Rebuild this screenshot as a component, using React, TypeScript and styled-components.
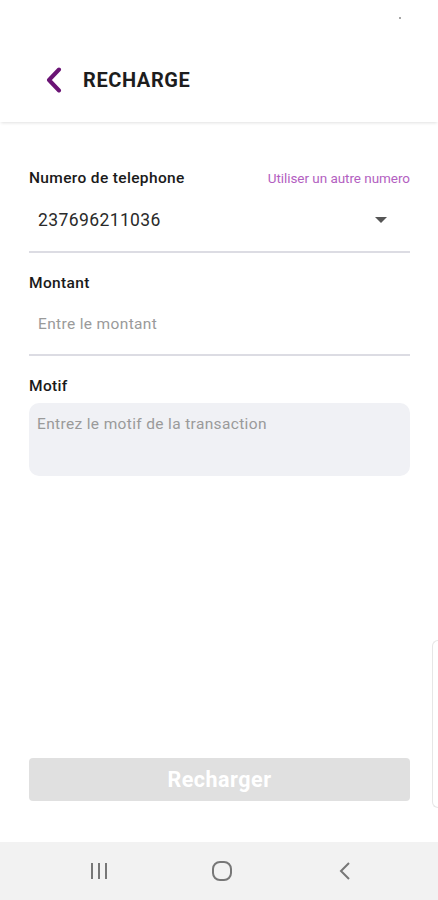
import React from "react";
import styled, { createGlobalStyle } from "styled-components";

const Global = createGlobalStyle`
  html, body { margin: 0; padding: 0; background: #ffffff; }
  body { font-family: Roboto, "Noto Sans", sans-serif; }
  * { box-sizing: border-box; }
`;

const Screen = styled.div`
  position: relative;
  width: 438px;
  height: 900px;
  display: flex;
  flex-direction: column;
  background: #fff;
  overflow: hidden;
`;

const StatusBar = styled.div`
  height: 38px;
  position: relative;
`;

const Dot = styled.span`
  position: absolute;
  left: 399px;
  top: 17px;
  width: 2px;
  height: 2px;
  border-radius: 50%;
  background: #888;
`;

const Header = styled.header`
  height: 84px;
  display: flex;
  align-items: center;
  padding: 0 0 0 45px;
  gap: 21px;
  box-shadow: 0 2px 3px -1px rgba(0, 0, 0, 0.12);
  position: relative;
  z-index: 1;
`;

const BackButton = styled.button`
  border: 0;
  background: none;
  padding: 0;
  width: 17px;
  height: 26px;
  display: flex;
  align-items: center;
  justify-content: center;
`;

const Title = styled.h1`
  margin: 0;
  font-size: 20px;
  font-weight: 700;
  color: #1d1d1d;
  letter-spacing: 0.6px;
`;

const Form = styled.main`
  flex: 1;
  display: flex;
  flex-direction: column;
  padding: 47px 28px 0 29px;
`;

const LabelRow = styled.div`
  display: flex;
  justify-content: space-between;
  align-items: baseline;
  height: 20px;
`;

const Label = styled.label`
  font-size: 15.5px;
  font-weight: 500;
  color: #1a1a1a;
  letter-spacing: 0.35px;
`;

const Link = styled.a`
  font-size: 13.5px;
  color: #b35fc1;
  text-decoration: none;
  letter-spacing: -0.05px;
`;

const UnderlineField = styled.div<{ $h: number }>`
  height: ${(p) => p.$h}px;
  display: flex;
  align-items: center;
  justify-content: space-between;
  padding: 0 23px 0 9px;
  border-bottom: 2px solid #dcdce3;
`;

const Value = styled.span`
  font-size: 17.5px;
  color: #2a2a2a;
  letter-spacing: 0.4px;
`;

const Placeholder = styled.span`
  font-size: 15.5px;
  color: #9a9a9a;
  letter-spacing: 0.35px;
`;

const Caret = styled.span`
  width: 0;
  height: 0;
  border-left: 6px solid transparent;
  border-right: 6px solid transparent;
  border-top: 6px solid #555;
`;

const Section = styled.div<{ $mt: number }>`
  margin-top: ${(p) => p.$mt}px;
  display: flex;
  flex-direction: column;
`;

const TextArea = styled.div`
  margin-top: 6px;
  height: 73px;
  background: #f0f1f5;
  border-radius: 10px;
  padding: 12px 8px;
  font-size: 15.5px;
  color: #9a9a9a;
  letter-spacing: 0.35px;
`;

const Spacer = styled.div`
  flex: 1;
`;

const SubmitButton = styled.button`
  height: 43px;
  border: 0;
  border-radius: 4px;
  background: #e0e0e0;
  color: #ffffff;
  font-family: Roboto, sans-serif;
  font-size: 21.5px;
  font-weight: 700;
  letter-spacing: 0.5px;
  margin-bottom: 41px;
`;

const NavBar = styled.nav`
  height: 58px;
  background: #f2f2f2;
  display: grid;
  grid-template-columns: 123px 123px 123px;
  align-items: center;
  justify-items: center;
  padding: 0 0 0 37px;
`;

const EdgeHandle = styled.div`
  position: absolute;
  right: -4px;
  top: 640px;
  width: 10px;
  height: 168px;
  border: 1.5px solid #e6e6e6;
  border-right: 0;
  border-radius: 6px 0 0 6px;
`;

export default function App() {
  return (
    <Screen>
      <Global />
      <StatusBar>
        <Dot />
      </StatusBar>
      <Header>
        <BackButton aria-label="Retour">
          <svg width="17" height="26" viewBox="0 0 17 26">
            <path d="M14 2.5 L4 13 L14 23.5" fill="none" stroke="#6b1475" strokeWidth="4" strokeLinecap="round" strokeLinejoin="round" />
          </svg>
        </BackButton>
        <Title>RECHARGE</Title>
      </Header>
      <Form>
        <Section $mt={0}>
          <LabelRow>
            <Label>Numero de telephone</Label>
            <Link>Utiliser un autre numero</Link>
          </LabelRow>
          <UnderlineField $h={64}>
            <Value>237696211036</Value>
            <Caret />
          </UnderlineField>
        </Section>
        <Section $mt={21}>
          <LabelRow>
            <Label>Montant</Label>
          </LabelRow>
          <UnderlineField $h={62}>
            <Placeholder>Entre le montant</Placeholder>
          </UnderlineField>
        </Section>
        <Section $mt={21}>
          <LabelRow>
            <Label>Motif</Label>
          </LabelRow>
          <TextArea>Entrez le motif de la transaction</TextArea>
        </Section>
        <Spacer />
        <SubmitButton>Recharger</SubmitButton>
      </Form>
      <NavBar>
        <svg width="20" height="18" viewBox="0 0 20 18">
          <path d="M3 1v16M10 1v16M17 1v16" stroke="#777" strokeWidth="2" />
        </svg>
        <svg width="22" height="22" viewBox="0 0 22 22">
          <rect x="2" y="2" width="18" height="18" rx="7" fill="none" stroke="#777" strokeWidth="2" />
        </svg>
        <svg width="14" height="20" viewBox="0 0 14 20">
          <path d="M11 2 L3 10 L11 18" fill="none" stroke="#777" strokeWidth="2" />
        </svg>
      </NavBar>
      <EdgeHandle />
    </Screen>
  );
}
